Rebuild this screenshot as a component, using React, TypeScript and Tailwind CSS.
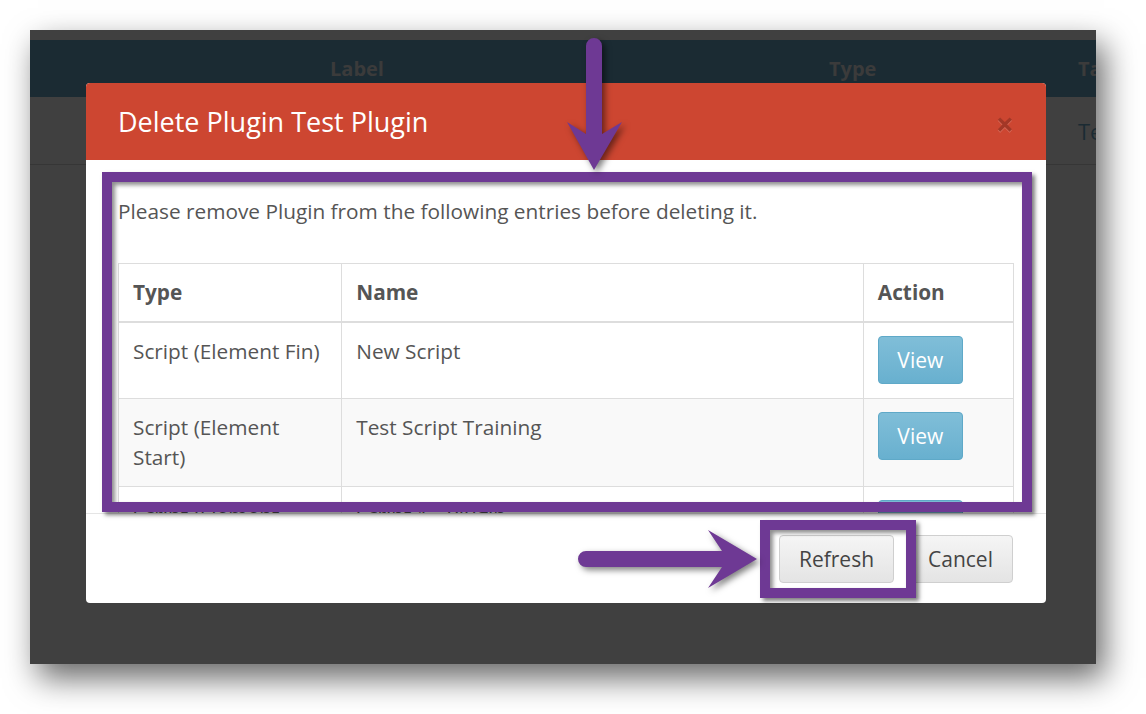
import React from "react";

const rows = [
  { type: "Script (Element Fin)", name: "New Script", bg: "bg-white" },
  { type: "Script (Element Start)", name: "Test Script Training", bg: "bg-[#f9f9f9]" },
  { type: "Script (Element Finish)", name: "Script 1 - Plugin", bg: "bg-white" },
];

function ViewButton() {
  return (
    <button className="w-[85px] h-[48px] rounded-[4px] border border-[#5fa9c8] bg-gradient-to-b from-[#80bed8] to-[#68b0cf] text-white text-[21px] leading-none">
      View
    </button>
  );
}

export default function App() {
  return (
    <div className="relative w-[1146px] h-[714px] bg-white overflow-hidden font-['Open_Sans',sans-serif]">
      <div className="relative ml-[30px] mt-[30px] w-[1066px] h-[634px] bg-[#404040] shadow-[8px_14px_30px_rgba(0,0,0,0.6)] overflow-hidden">
        <div className="h-[10px]" />
        <div className="h-[57px] bg-[#1b2b33] flex items-center text-[20px] font-bold text-[#3b3b3b] whitespace-nowrap">
          <div className="w-[799px] shrink-0 pl-[300px]">Label</div>
          <div className="w-[249px] shrink-0">Type</div>
          <div className="shrink-0">Tag</div>
        </div>
        <div className="h-[68px] border-b border-[#363636] flex items-center pt-[2px]">
          <div className="ml-[1048px] shrink-0 text-[22px] text-[#1b2b33] whitespace-nowrap">Test</div>
        </div>

        <div className="absolute left-[56px] top-[53px] w-[960px] h-[520px] bg-white rounded-[4px] overflow-hidden flex flex-col">
          <div className="h-[77px] shrink-0 bg-[#cd4631] flex items-center justify-between pl-[32px] pr-[32px]">
            <div className="text-white text-[27px] leading-none">Delete Plugin Test Plugin</div>
            <div className="text-[32px] font-bold leading-none text-black opacity-20 [text-shadow:0_1px_0_#fff] pt-[4px]">×</div>
          </div>
          <div className="h-[353px] shrink-0 overflow-hidden px-[32px] pt-[36px] text-[20.8px] leading-[30px] text-[#555]">
            <p>Please remove Plugin from the following entries before deleting it.</p>
            <table className="mt-[37px] w-full border-collapse border border-[#ddd] table-fixed">
              <colgroup>
                <col className="w-[223px]" />
                <col className="w-[521px]" />
                <col className="w-[150px]" />
              </colgroup>
              <thead>
                <tr className="border-b-2 border-[#ddd]">
                  <th className="text-left font-bold px-[14px] pt-[13px] pb-[14px] border border-[#ddd] border-b-2">Type</th>
                  <th className="text-left font-bold px-[14px] pt-[13px] pb-[14px] border border-[#ddd] border-b-2">Name</th>
                  <th className="text-left font-bold px-[14px] pt-[13px] pb-[14px] border border-[#ddd] border-b-2">Action</th>
                </tr>
              </thead>
              <tbody>
                {rows.map((r) => (
                  <tr key={r.name} className={r.bg}>
                    <td className="align-top px-[14px] pt-[13px] pb-[14px] border border-[#ddd]">{r.type}</td>
                    <td className="align-top px-[14px] pt-[13px] pb-[14px] border border-[#ddd]">{r.name}</td>
                    <td className="align-top px-[14px] pt-[13px] pb-[14px] border border-[#ddd]">
                      <ViewButton />
                    </td>
                  </tr>
                ))}
              </tbody>
            </table>
          </div>
          <div className="flex-1 border-t border-[#e5e5e5] flex items-start justify-end pt-[21px] pr-[33px] gap-[14px]">
            <button className="w-[115px] h-[48px] rounded-[4px] border border-[#cfcfcf] bg-gradient-to-b from-[#f5f5f5] to-[#e4e4e4] text-[#444] text-[21px] leading-none">
              Refresh
            </button>
            <button className="w-[105px] h-[48px] rounded-[4px] border border-[#cfcfcf] bg-gradient-to-b from-[#f5f5f5] to-[#e4e4e4] text-[#444] text-[21px] leading-none">
              Cancel
            </button>
          </div>
        </div>
      </div>

      {/* annotations */}
      <div className="absolute left-[102px] top-[172px] w-[930px] h-[340px] border-[10px] border-[#6e3994] shadow-[3px_3px_4px_rgba(0,0,0,0.5),inset_3px_3px_4px_rgba(0,0,0,0.45)] pointer-events-none" />
      <div className="absolute left-[760px] top-[520px] w-[156px] h-[78px] border-[10px] border-[#6e3994] shadow-[3px_3px_4px_rgba(0,0,0,0.5),inset_3px_3px_4px_rgba(0,0,0,0.45)] pointer-events-none" />
      <svg
        className="absolute left-0 top-0 pointer-events-none drop-shadow-[3px_3px_3px_rgba(0,0,0,0.5)]"
        width="1146"
        height="714"
        viewBox="0 0 1146 714"
      >
        <path
          d="M586,46 A8,8 0 0 1 602,46 L602,134 L622,122 L594,170 L567,122 L586,134 Z"
          fill="#6e3994"
        />
        <path
          d="M586,551 L722,551 L708,530 L757,559 L708,588 L722,567 L586,567 A8,8 0 0 1 586,551 Z"
          fill="#6e3994"
        />
      </svg>
    </div>
  );
}
